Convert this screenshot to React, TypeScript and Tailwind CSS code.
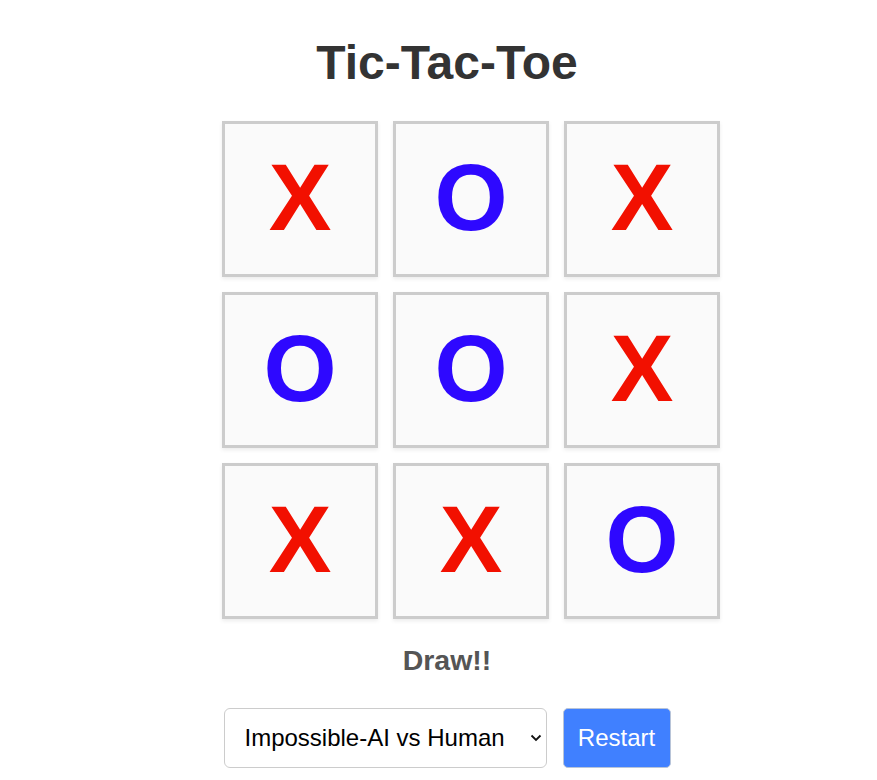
import React from "react";

const board = ["X", "O", "X", "O", "O", "X", "X", "X", "O"];

export default function App() {
  return (
    <div
      className="w-full min-h-[780px] bg-white flex flex-col items-center pl-[17px]"
      style={{ fontFamily: '"Liberation Sans", Arial, sans-serif' }}
    >
      <h1 className="mt-[35px] text-[48px] leading-[56px] font-bold text-[#333333]">
        Tic-Tac-Toe
      </h1>
      <div className="mt-[30px] ml-[48px] grid grid-cols-[156px_156px_156px] gap-[15px]">
        {board.map((v, i) => (
          <div
            key={i}
            className="w-[156px] h-[156px] border-[3px] border-[#cccccc] bg-[#fafafa] shadow-[0_2px_4px_rgba(0,0,0,0.08)] flex items-center justify-center"
          >
            <span
              className={
                "text-[94px] font-bold leading-none pb-[3px] " +
                (v === "X" ? "text-[#f21000]" : "text-[#2e08ff]")
              }
            >
              {v}
            </span>
          </div>
        ))}
      </div>
      <div className="mt-[25px] text-[28.5px] leading-[32px] font-bold text-[#555555]">
        Draw!!
      </div>
      <div className="mt-[32px] flex items-center gap-[16px]">
        <div className="relative">
          <select
            defaultValue="ai"
            className="appearance-none w-[323px] h-[60px] border border-[#cccccc] rounded-[6px] bg-white pl-[20px] pr-[30px] text-[24px] text-black"
          >
            <option value="ai">Impossible-AI vs Human</option>
            <option value="hh">Human vs Human</option>
          </select>
          <svg
            className="absolute right-[5px] top-[26px] pointer-events-none"
            width="12"
            height="8"
            viewBox="0 0 12 8"
            fill="none"
          >
            <path d="M1.5 1.5 L6 6 L10.5 1.5" stroke="#111" strokeWidth="1.8" />
          </svg>
        </div>
        <button className="w-[108px] h-[60px] rounded-[5px] border border-[#b8c4d8] bg-[#4080ff] text-white text-[24px]">
          Restart
        </button>
      </div>
    </div>
  );
}
